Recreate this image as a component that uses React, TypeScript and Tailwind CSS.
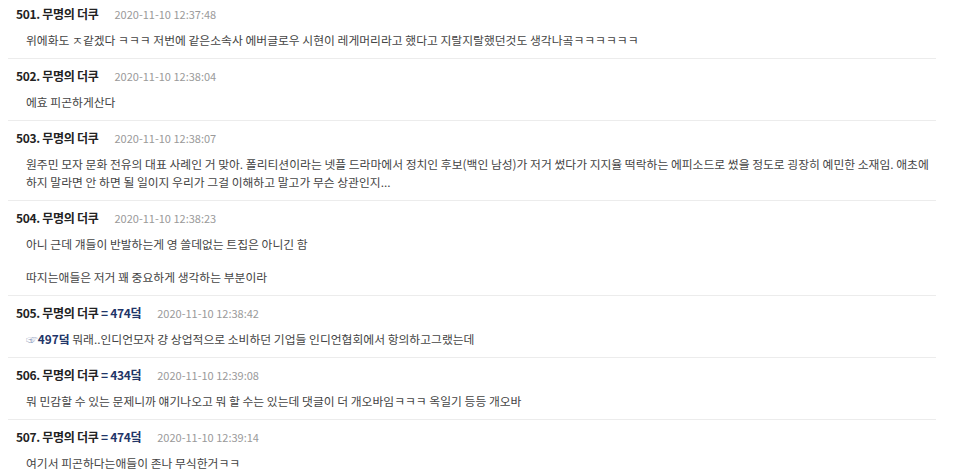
import React from "react";

type Reply = {
  no: number;
  level?: string;
  date: string;
  lines: React.ReactNode[];
};

const replies: Reply[] = [
  {
    no: 501,
    date: "2020-11-10 12:37:48",
    lines: ["위에화도 ㅈ같겠다 ㅋㅋㅋ 저번에 같은소속사 에버글로우 시현이 레게머리라고 했다고 지랄지랄했던것도 생각나곸ㅋㅋㅋㅋㅋㅋ"],
  },
  {
    no: 502,
    date: "2020-11-10 12:38:04",
    lines: ["에효 피곤하게산다"],
  },
  {
    no: 503,
    date: "2020-11-10 12:38:07",
    lines: [
      "원주민 모자 문화 전유의 대표 사례인 거 맞아. 폴리티션이라는 넷플 드라마에서 정치인 후보(백인 남성)가 저거 썼다가 지지율 떡락하는 에피소드로 썼을 정도로 굉장히 예민한 소재임. 애초에 하지 말라면 안 하면 될 일이지 우리가 그걸 이해하고 말고가 무슨 상관인지...",
    ],
  },
  {
    no: 504,
    date: "2020-11-10 12:38:23",
    lines: ["아니 근데 걔들이 반발하는게 영 쓸데없는 트집은 아니긴 함", "따지는애들은 저거 꽤 중요하게 생각하는 부분이라"],
  },
  {
    no: 505,
    level: "474",
    date: "2020-11-10 12:38:42",
    lines: [
      <>
        <span className="text-[#9aa8c4]">☞</span>
        <span className="font-bold text-[#1f3568]">497덬</span> 뭐래..인디언모자 걍 상업적으로 소비하던 기업들 인디언협회에서 항의하고그랬는데
      </>,
    ],
  },
  {
    no: 506,
    level: "434",
    date: "2020-11-10 12:39:08",
    lines: ["뭐 민감할 수 있는 문제니까 얘기나오고 뭐 할 수는 있는데 댓글이 더 개오바임ㅋㅋㅋ 옥일기 등등 개오바"],
  },
  {
    no: 507,
    level: "474",
    date: "2020-11-10 12:39:14",
    lines: ["여기서 피곤하다는애들이 존나 무식한거ㅋㅋ"],
  },
];

const ReplyRow = ({ reply, first }: { reply: Reply; first: boolean }) => (
  <div className={`border-b border-[#ececec] pb-[9px] ${first ? "pt-[4px]" : "pt-[7px]"}`}>
    <div className="flex h-[20px] items-center pl-[8px]">
      <span className="text-[12px] font-bold tracking-[-0.3px] text-[#222]">
        {reply.no}. 무명의 더쿠
        {reply.level && <span className="text-[#1f3568]"> = {reply.level}덬</span>}
      </span>
      <span className="ml-[16px] text-[11px] text-[#9a9a9a]">{reply.date}</span>
    </div>
    <div className="mt-[7px] pl-[18px] pr-[2px] text-[11.8px] leading-[18px] text-[#444]">
      {reply.lines.map((line, i) => (
        <p key={i} className={i > 0 ? "mt-[15px]" : ""}>
          {line}
        </p>
      ))}
    </div>
  </div>
);

export default function App() {
  return (
    <div
      className="h-[474px] w-[960px] overflow-hidden bg-white"
      style={{ fontFamily: '"Noto Sans CJK KR", "Noto Sans", sans-serif' }}
    >
      <div className="ml-[8px] w-[928px]">
        {replies.map((r, i) => (
          <ReplyRow key={r.no} reply={r} first={i === 0} />
        ))}
      </div>
    </div>
  );
}
